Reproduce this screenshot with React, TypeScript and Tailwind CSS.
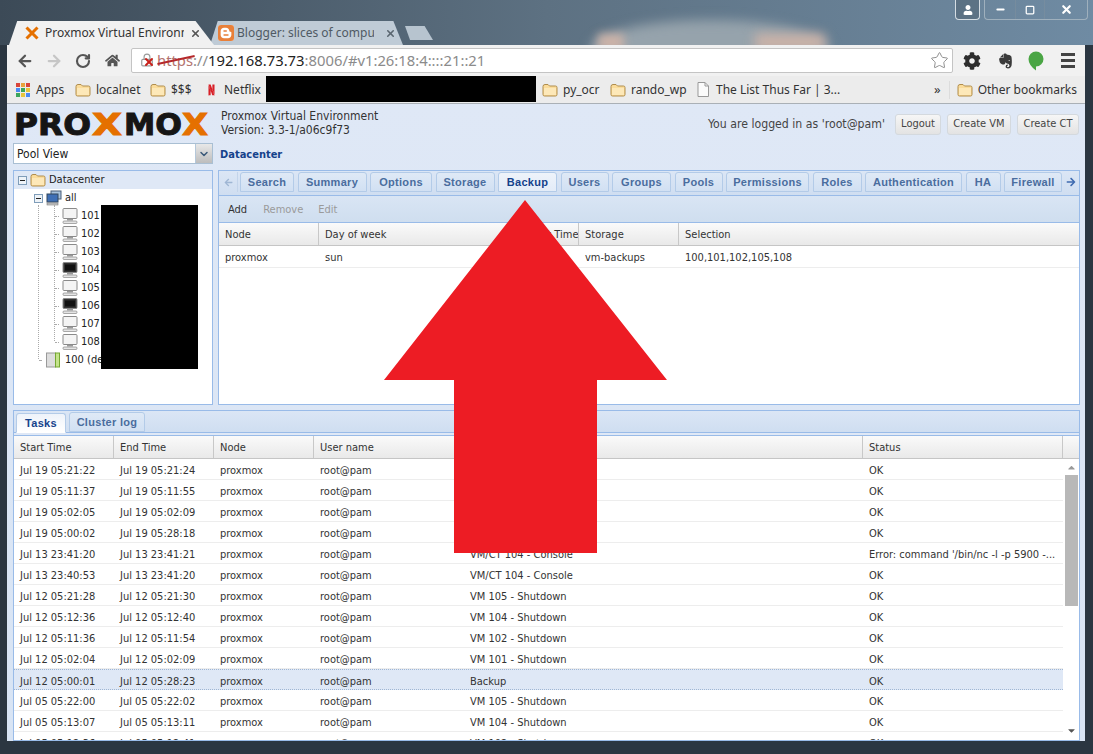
import { ArrowLeft, ArrowRight, ChevronDown, RotateCw, Star, X, Lock, Minus, Square } from 'lucide-react';
import { FaCog, FaHome, FaUser, FaCaretUp, FaCaretDown, FaArrowLeft, FaArrowRight } from 'react-icons/fa';
import { SiBlogger, SiEvernote, SiNetflix } from 'react-icons/si';

const tabs = [
  { label: 'Search', w: 'w-[54px]' },
  { label: 'Summary', w: 'w-[69px]' },
  { label: 'Options', w: 'w-[62px]' },
  { label: 'Storage', w: 'w-[59px]' },
  { label: 'Backup', w: 'w-[59px]', active: true },
  { label: 'Users', w: 'w-[48px]' },
  { label: 'Groups', w: 'w-[59px]' },
  { label: 'Pools', w: 'w-[48px]' },
  { label: 'Permissions', w: 'w-[83px]' },
  { label: 'Roles', w: 'w-[49px]' },
  { label: 'Authentication', w: 'w-[97px]' },
  { label: 'HA', w: 'w-[35px]' },
  { label: 'Firewall', w: 'w-[58px]' },
];

const tasks = [
  ['Jul 19 05:21:22', 'Jul 19 05:21:24', 'VM 105 - Shutdown', 'OK'],
  ['Jul 19 05:11:37', 'Jul 19 05:11:55', 'VM 104 - Shutdown', 'OK'],
  ['Jul 19 05:02:05', 'Jul 19 05:02:09', 'VM 102 - Shutdown', 'OK'],
  ['Jul 19 05:00:02', 'Jul 19 05:28:18', 'Backup', 'OK'],
  ['Jul 13 23:41:20', 'Jul 13 23:41:21', 'VM/CT 104 - Console', "Error: command '/bin/nc -l -p 5900 -..."],
  ['Jul 13 23:40:53', 'Jul 13 23:41:20', 'VM/CT 104 - Console', 'OK'],
  ['Jul 12 05:21:28', 'Jul 12 05:21:30', 'VM 105 - Shutdown', 'OK'],
  ['Jul 12 05:12:36', 'Jul 12 05:12:40', 'VM 104 - Shutdown', 'OK'],
  ['Jul 12 05:11:36', 'Jul 12 05:11:54', 'VM 102 - Shutdown', 'OK'],
  ['Jul 12 05:02:04', 'Jul 12 05:02:09', 'VM 101 - Shutdown', 'OK'],
  ['Jul 12 05:00:01', 'Jul 12 05:28:23', 'Backup', 'OK'],
  ['Jul 05 05:22:00', 'Jul 05 05:22:02', 'VM 105 - Shutdown', 'OK'],
  ['Jul 05 05:13:07', 'Jul 05 05:13:11', 'VM 104 - Shutdown', 'OK'],
  ['Jul 05 05:12:36', 'Jul 05 05:12:41', 'VM 102 - Shutdown', 'OK'],
];

const vms = [
  { id: '101' },
  { id: '102' },
  { id: '103' },
  { id: '104', on: true },
  { id: '105' },
  { id: '106', on: true },
  { id: '107' },
  { id: '108' },
];

const Folder = ({ className = 'w-[16px] h-[14px]' }: { className?: string }) => (
  <svg viewBox="0 0 16 14" className={`${className} shrink-0`}>
    <path d="M1 3.5 Q1 1.5 3 1.5 H6 L7.5 3 H13.5 Q15 3 15 4.5 V11.5 Q15 13 13.5 13 H2.5 Q1 13 1 11.5 Z" fill="#fbdc9a" stroke="#b08d4c" />
    <path d="M2 5 H14 V12 H2 Z" fill="#fde8b8" />
  </svg>
);

const Monitor = ({ on }: { on?: boolean }) => (
  <svg viewBox="0 0 16 16" className="w-[16px] h-[16px] shrink-0">
    <rect x="1" y="0.5" width="14" height="10" rx="1" fill={on ? '#333' : '#f4f4f4'} stroke="#8a8a8a" />
    {on && <rect x="3" y="2.5" width="10" height="6" fill="#111" />}
    <rect x="5" y="11" width="6" height="1.5" fill="#999" />
    <rect x="1" y="13" width="14" height="2.5" rx="1" fill="#e4e4e4" stroke="#888" strokeWidth="0.7" />
  </svg>
);

const Expander = () => (
  <span className="w-[9px] h-[9px] border border-[#7f9db9] bg-[#eef3f8] flex items-center justify-center shrink-0">
    <span className="w-[5px] h-px bg-[#222]" />
  </span>
);

const HeaderCell = ({ children, last }: { children?: React.ReactNode; last?: boolean }) => (
  <div className={`pl-[6px] pt-[2px] flex items-center whitespace-nowrap overflow-hidden ${last ? '' : 'border-r border-[#c8c8c8]'}`}>{children}</div>
);

export default function App() {
  return (
    <div className="relative w-[1093px] h-[754px] overflow-hidden flex flex-col bg-[#2b3641] text-[11px] text-[#222] [font-family:'DejaVu_Sans_Condensed','DejaVu_Sans',sans-serif]">
      {/* title bar with the blurred desktop behind it */}
      <div className="relative h-[45px] shrink-0 overflow-hidden bg-gradient-to-r from-[#3c4a57] via-[#5d7182] to-[#6f8ba3]">
        <div className="absolute left-[590px] top-[20px] w-[240px] h-[60px] rounded-[50%] bg-[#96a3ac] blur-[6px]" />
        <div className="absolute left-[598px] top-[34px] w-[26px] h-[16px] bg-[#cdb3a8] blur-[5px]" />
        <div className="absolute left-[755px] top-[34px] w-[70px] h-[16px] bg-[#cdb3a8] blur-[6px]" />

        <div className="absolute right-[113px] top-0 w-[25px] h-[20px] rounded-b-[4px] border border-t-0 border-[#d5dde3] bg-[#56697a]/70 flex items-center justify-center">
          <FaUser className="w-[10px] h-[10px] text-white" />
        </div>
        <div className="absolute right-[5px] top-0 w-[104px] h-[20px] rounded-b-[4px] border border-t-0 border-[#9fb0bd] flex items-center text-white">
          <span className="w-[30px] flex justify-center"><Minus className="w-[11px] h-[11px]" strokeWidth={4} /></span>
          <span className="w-[30px] flex justify-center border-x border-[#7d909f]/60 h-full items-center"><Square className="w-[10px] h-[10px]" strokeWidth={3} /></span>
          <span className="flex-1 flex justify-center"><X className="w-[13px] h-[13px]" strokeWidth={4} /></span>
        </div>

        {/* browser tabs */}
        <div className="absolute left-[9px] bottom-0 flex items-end">
          <div className="w-[205px] h-[24px] bg-[#f1f1f1] [clip-path:polygon(0_100%,4%_0,91%_0,100%_100%)] flex items-center pl-[16px] gap-[6px] [font-family:'Noto_Sans',sans-serif] text-[12px] text-[#333] z-10">
            <svg viewBox="0 0 14 14" className="w-[14px] h-[14px] shrink-0">
              <path d="M1.5 1.5 L12.5 12.5 M12.5 1.5 L1.5 12.5" stroke="#e57000" strokeWidth="3" />
            </svg>
            <span className="w-[139px] overflow-hidden whitespace-nowrap">Proxmox Virtual Environm</span>
            <X className="w-[11px] h-[11px] text-[#555]" strokeWidth={3.5} />
          </div>
          <div className="w-[193px] h-[24px] -ml-[4px] bg-[#bfcbd6] [clip-path:polygon(0_100%,4%_0,95%_0,100%_100%)] flex items-center pl-[8px] gap-[3px] [font-family:'Noto_Sans',sans-serif] text-[12px] text-[#4f5a64]">
            <span className="w-[16px] h-[16px] rounded-[3px] bg-[#e8803a] flex items-center justify-center shrink-0">
              <SiBlogger className="w-[16px] h-[16px] text-[#e8803a] bg-white rounded-[3px]" />
            </span>
            <span className="w-[137px] overflow-hidden whitespace-nowrap">Blogger: slices of comput</span>
            <X className="ml-[8px] w-[11px] h-[11px] text-[#5a6670]" strokeWidth={3.5} />
          </div>
          <div className="w-[28px] h-[14px] mb-[5px] ml-[2px] bg-[#b7c4cf] [clip-path:polygon(0_0,70%_0,100%_100%,18%_100%)]" />
        </div>
      </div>

      <div className="ml-[7px] mr-[8px] flex-1 flex flex-col min-h-0">
        {/* toolbar */}
        <div className="h-[31px] shrink-0 bg-[#f1f1f1] flex items-center pl-[9px] pr-[8px]">
          <ArrowLeft className="w-[18px] h-[18px] text-[#555]" strokeWidth={3} />
          <ArrowRight className="w-[18px] h-[18px] ml-[11px] text-[#c6c6c6]" strokeWidth={3} />
          <RotateCw className="w-[16px] h-[16px] ml-[12px] text-[#555]" strokeWidth={3.2} />
          <FaHome className="w-[15px] h-[15px] ml-[14px] text-[#555]" />
          <div className="ml-[11px] w-[822px] h-[25px] bg-white border border-[#c4c4c4] rounded-[2px] flex items-center pl-[8px] pr-[3px] [font-family:'Noto_Sans',sans-serif] text-[14.8px] whitespace-nowrap">
            <span className="relative w-[16px] h-[16px] shrink-0">
              <Lock className="w-[14px] h-[14px] text-[#999]" />
              <X className="absolute left-[3px] top-[3px] w-[12px] h-[12px] text-[#c8201a]" strokeWidth={4} />
            </span>
            <span className="relative ml-[1px] text-[#b3736f]">
              https
              <span className="absolute left-0 -right-[2px] top-[10px] h-[1.5px] bg-[#b5282a] -rotate-[12deg]" />
            </span>
            <span className="text-[#8b8b8b]">://</span>
            <span className="text-[#222]">192.168.73.73</span>
            <span className="text-[#8b8b8b]">:8006/#v1:26:18:4::::21::21</span>
            <Star className="ml-auto w-[19px] h-[19px] text-[#8a8a8a]" strokeWidth={1.2} />
          </div>
          <FaCog className="ml-[10px] w-[18px] h-[18px] text-[#2d2d2d]" />
          <SiEvernote className="ml-[17px] w-[15px] h-[18px] text-[#3a3a3a]" />
          <svg viewBox="0 0 16 20" className="ml-[15px] w-[16px] h-[20px]">
            <path d="M8 0.5 A7.5 7.5 0 0 1 8 15.5 L8 19.5 Q0.5 14 0.5 8 A7.5 7.5 0 0 1 8 0.5 Z" fill="#4aa544" />
          </svg>
          <div className="ml-[17px] w-[14px] flex flex-col gap-[3px]">
            <span className="h-[3px] bg-[#444]" />
            <span className="h-[3px] bg-[#444]" />
            <span className="h-[3px] bg-[#444]" />
          </div>
        </div>

        {/* bookmarks bar */}
        <div className="h-[28px] shrink-0 bg-[#ececec] border-b border-[#aab0b6] flex items-center pl-[9px] pr-[8px] [font-family:'Noto_Sans',sans-serif] text-[12px] text-[#333] whitespace-nowrap">
          <div className="w-[14px] h-[14px] grid grid-cols-3 gap-[1px] shrink-0">
            <span className="bg-[#d9453a]" /><span className="bg-[#e8a33c]" /><span className="bg-[#d9453a]" />
            <span className="bg-[#4a8af4]" /><span className="bg-[#3ba55c]" /><span className="bg-[#e8c53c]" />
            <span className="bg-[#3ba55c]" /><span className="bg-[#e8c53c]" /><span className="bg-[#4a8af4]" />
          </div>
          <span className="ml-[6px] w-[39px]">Apps</span>
          <Folder />
          <span className="ml-[5px] w-[54px]">localnet</span>
          <Folder />
          <span className="ml-[5px] w-[35px]">$$$</span>
          <SiNetflix className="w-[11px] h-[14px] text-[#d81f26]" />
          <span className="ml-[7px] w-[42px]">Netflix</span>
          <div className="w-[270px] h-[26px] -mb-[1px] -mt-[2px] bg-black shrink-0" />
          <span className="ml-[6px]"><Folder /></span>
          <span className="ml-[5px] w-[47px]">py_ocr</span>
          <Folder />
          <span className="ml-[5px] w-[66px]">rando_wp</span>
          <svg viewBox="0 0 12 15" className="w-[12px] h-[15px] shrink-0">
            <path d="M1 0.5 H8 L11.5 4 V14.5 H1 Z" fill="#fbfbfb" stroke="#999" />
            <path d="M8 0.5 V4 H11.5" fill="none" stroke="#999" />
          </svg>
          <span className="ml-[7px]">The List Thus Far | 3...</span>
          <span className="ml-auto text-[13px]">»</span>
          <span className="ml-[8px] w-px h-[18px] bg-[#dcdcdc]" />
          <span className="ml-[7px]"><Folder /></span>
          <span className="ml-[5px]">Other bookmarks</span>
        </div>

        {/* proxmox page */}
        <div className="h-[637px] shrink-0 pl-[6px] pr-[5px] bg-gradient-to-b from-[#dfe8f6] to-[#d8e4f4] flex flex-col">
          <div className="h-[66px] shrink-0 flex">
            <div className="w-[200px] shrink-0 flex flex-col">
              <svg viewBox="0 0 195 27" className="w-[195px] h-[27px] mt-[6px] ml-px [font-family:'DejaVu_Sans',sans-serif]">
                <g fontWeight="700" fontSize="30" strokeWidth="1">
                  <text x="0" y="25" textLength="77" lengthAdjust="spacingAndGlyphs" fill="#151515" stroke="#151515">PRO</text>
                  <text x="78" y="25" textLength="30" lengthAdjust="spacingAndGlyphs" fill="#e57000" stroke="#e57000">X</text>
                  <text x="110" y="25" textLength="58" lengthAdjust="spacingAndGlyphs" fill="#151515" stroke="#151515">MO</text>
                  <text x="168" y="25" textLength="26" lengthAdjust="spacingAndGlyphs" fill="#e57000" stroke="#e57000">X</text>
                </g>
              </svg>
              <div className="mt-[6px] h-[21px] flex border border-[#a9bfd3] bg-white">
                <span className="flex-1 pl-[3px] flex items-center text-[12px]">Pool View</span>
                <span className="w-[17px] bg-gradient-to-b from-[#e8e8e8] to-[#bdbdbd] flex items-center justify-center border-l border-[#b5c8da]">
                  <ChevronDown className="w-[12px] h-[12px] text-[#3b5a7a]" strokeWidth={3} />
                </span>
              </div>
            </div>
            <div className="flex-1 ml-[7px] flex flex-col">
              <div className="flex">
                <div className="pl-[1px] pt-[5px] text-[12px] leading-[14px] text-[#333]">
                  <div>Proxmox Virtual Environment</div>
                  <div>Version: 3.3-1/a06c9f73</div>
                </div>
                <div className="ml-auto mr-[1px] pt-[7px] flex items-center gap-[6px] text-[#444]">
                  <span className="mr-[4px] text-[12.2px]">You are logged in as 'root@pam'</span>
                  <button className="w-[46px] h-[21px] rounded-[3px] border border-[#d4d9de] bg-gradient-to-b from-[#f6f6f6] to-[#e3e3e3]">Logout</button>
                  <button className="w-[64px] h-[21px] rounded-[3px] border border-[#d4d9de] bg-gradient-to-b from-[#f6f6f6] to-[#e3e3e3]">Create VM</button>
                  <button className="w-[62px] h-[21px] rounded-[3px] border border-[#d4d9de] bg-gradient-to-b from-[#f6f6f6] to-[#e3e3e3]">Create CT</button>
                </div>
              </div>
              <div className="mt-[10px] font-bold text-[11px] text-[#15428b]">Datacenter</div>
            </div>
          </div>

          <div className="h-[235px] shrink-0 flex gap-[5px]">
            {/* resource tree */}
            <div className="relative w-[200px] shrink-0 border border-[#99bbe8] bg-white overflow-hidden">
              <div className="h-[18px] bg-[#dfe8f6] flex items-center pl-[4px] gap-[3px]">
                <Expander />
                <Folder className="w-[16px] h-[14px]" />
                <span>Datacenter</span>
              </div>
              <div className="h-[18px] flex items-center pl-[20px] gap-[3px]">
                <Expander />
                <svg viewBox="0 0 16 16" className="w-[16px] h-[16px] shrink-0">
                  <rect x="5" y="1" width="10" height="8" fill="#a9c2dc" stroke="#4a5f78" />
                  <rect x="1" y="4" width="11" height="8" fill="#3f6fb5" stroke="#33475c" />
                  <rect x="1" y="13" width="11" height="2" fill="#ccc" stroke="#666" strokeWidth="0.5" />
                </svg>
                <span>all</span>
              </div>
              {vms.map((vm) => (
                <div key={vm.id} className="h-[18px] flex items-center pl-[41px] gap-[3px]">
                  <span className="w-[4px] border-t border-dotted border-[#aaa]" />
                  <Monitor on={vm.on} />
                  <span>{vm.id}</span>
                </div>
              ))}
              <div className="h-[18px] flex items-center pl-[25px] gap-[5px]">
                <span className="w-[2px] border-t border-dotted border-[#aaa]" />
                <svg viewBox="0 0 14 16" className="w-[14px] h-[16px] shrink-0">
                  <rect x="0.5" y="1" width="9" height="14" fill="#ddd" stroke="#999" />
                  <rect x="9.5" y="1" width="4" height="14" fill="#c4e38a" stroke="#75a832" />
                </svg>
                <span>100 (de</span>
              </div>
              {/* tree connectors and the redacted names */}
              <div className="absolute left-[24px] top-[34px] h-[154px] border-l border-dotted border-[#aaa]" />
              <div className="absolute left-[40px] top-[34px] h-[136px] border-l border-dotted border-[#aaa]" />
              <div className="absolute left-[87px] top-[34px] w-[97px] h-[164px] bg-black" />
            </div>

            {/* datacenter panel */}
            <div className="flex-1 border border-[#99bbe8] bg-white flex flex-col">
              <div className="h-[25px] shrink-0 bg-gradient-to-b from-[#dbe6f5] to-[#cfdef1] border-b border-[#99bbe8] flex items-start pt-[1px] font-bold [font-family:'Liberation_Sans',sans-serif] tracking-[0.3px]">
                <span className="w-[19px] h-[20px] flex items-center justify-center border-r border-[#c3d4ea]">
                  <FaArrowLeft className="w-[9px] h-[9px] text-[#9fb6d4]" />
                </span>
                <div className="ml-[2px] flex gap-[3.5px]">
                  {tabs.map((t) => (
                    <div
                      key={t.label}
                      className={`${t.w} h-[20px] rounded-t-[3px] border border-[#b3cbe8] flex items-center justify-center ${
                        t.active ? 'bg-gradient-to-b from-[#eef3fa] to-[#e3ecf8] text-[#15428b]' : 'bg-gradient-to-b from-[#dfe9f6] to-[#d1e0f3] text-[#4a6d9e]'
                      }`}
                    >
                      {t.label}
                    </div>
                  ))}
                </div>
                <span className="flex-1 h-[20px] flex items-center justify-center">
                  <FaArrowRight className="w-[10px] h-[10px] text-[#3f6bb0]" />
                </span>
              </div>
              <div className="h-[27px] shrink-0 pt-[2px] bg-gradient-to-b from-[#d9e5f4] to-[#cfdeef] border-b border-[#99bbe8] flex items-center pl-[9px]">
                <span className="text-[#333]">Add</span>
                <span className="ml-[16px] text-[#9a9a9a]">Remove</span>
                <span className="ml-[15px] text-[#9a9a9a]">Edit</span>
              </div>
              <div className="h-[23px] shrink-0 grid grid-cols-[100px_202px_58px_100px_1fr] bg-gradient-to-b from-[#fafafa] to-[#e9e9e9] border-b border-[#c5c5c5] text-[#333]">
                <HeaderCell>Node</HeaderCell>
                <HeaderCell>Day of week</HeaderCell>
                <HeaderCell>Start Time</HeaderCell>
                <HeaderCell>Storage</HeaderCell>
                <HeaderCell last>Selection</HeaderCell>
              </div>
              <div className="h-[22px] pt-[4px] shrink-0 grid grid-cols-[100px_202px_58px_100px_1fr] items-center border-b border-[#ededed] text-[#333]">
                <span className="pl-[6px]">proxmox</span>
                <span className="pl-[6px]">sun</span>
                <span />
                <span className="pl-[6px]">vm-backups</span>
                <span className="pl-[6px]">100,101,102,105,108</span>
              </div>
            </div>
          </div>

          {/* log panel */}
          <div className="mt-[5px] h-[331px] shrink-0 border border-[#99bbe8] bg-white flex flex-col overflow-hidden">
            <div className="h-[22px] shrink-0 bg-gradient-to-b from-[#dbe6f5] to-[#cfdef1] border-b border-[#99bbe8] flex items-end pl-[2px] gap-[3px] font-bold [font-family:'Liberation_Sans',sans-serif] tracking-[0.3px]">
              <div className="w-[50px] h-[20px] -mb-px rounded-t-[3px] border border-[#b3cbe8] border-b-white bg-gradient-to-b from-[#eef3fa] to-white text-[#15428b] flex items-center justify-center">Tasks</div>
              <div className="w-[76px] h-[20px] rounded-t-[3px] border border-[#b3cbe8] bg-gradient-to-b from-[#dfe9f6] to-[#d1e0f3] text-[#4a6d9e] flex items-center justify-center">Cluster log</div>
            </div>
            <div className="h-[3px] shrink-0 bg-[#dfe8f6] border-b border-[#99bbe8]" />
            <div className="h-[23px] shrink-0 grid grid-cols-[100px_100px_100px_150px_399px_200px_1fr] bg-gradient-to-b from-[#fafafa] to-[#e9e9e9] border-b border-[#c5c5c5] text-[#333]">
              <HeaderCell>Start Time</HeaderCell>
              <HeaderCell>End Time</HeaderCell>
              <HeaderCell>Node</HeaderCell>
              <HeaderCell>User name</HeaderCell>
              <HeaderCell>Description</HeaderCell>
              <HeaderCell>Status</HeaderCell>
              <HeaderCell last />
            </div>
            <div className="flex-1 min-h-0 flex">
              <div className="w-[1049px] shrink-0 overflow-hidden text-[#333]">
                {tasks.map((row, i) => (
                  <div
                    key={row[0]}
                    className={`h-[21px] pt-[4px] grid grid-cols-[100px_100px_100px_150px_399px_200px] items-center border-b whitespace-nowrap ${
                      i === 10 ? 'bg-[#dfe8f6] border-y border-dotted border-[#9fb6d4]' : 'border-[#ededed]'
                    }`}
                  >
                    <span className="pl-[6px]">{row[0]}</span>
                    <span className="pl-[6px]">{row[1]}</span>
                    <span className="pl-[6px]">proxmox</span>
                    <span className="pl-[6px]">root@pam</span>
                    <span className="pl-[6px]">{row[2]}</span>
                    <span className="pl-[6px]">{row[3]}</span>
                  </div>
                ))}
              </div>
              <div className="flex-1 flex flex-col items-center pl-[1px]">
                <FaCaretUp className="w-[11px] h-[11px] mt-[3px] text-[#9a9a9a]" />
                <div className="w-[13px] h-[131px] mt-[2px] bg-[#b8b8b8]" />
                <FaCaretDown className="mt-auto mb-[4px] w-[11px] h-[11px] text-[#555]" />
              </div>
            </div>
          </div>
        </div>
      </div>

      {/* annotation pasted over the screenshot */}
      <svg viewBox="0 0 1093 754" className="absolute inset-0 w-[1093px] h-[754px] pointer-events-none">
        <polygon points="525,200 667,380 597,380 597,553 454,553 454,380 384,380" fill="#ed1c24" />
      </svg>
    </div>
  );
}
